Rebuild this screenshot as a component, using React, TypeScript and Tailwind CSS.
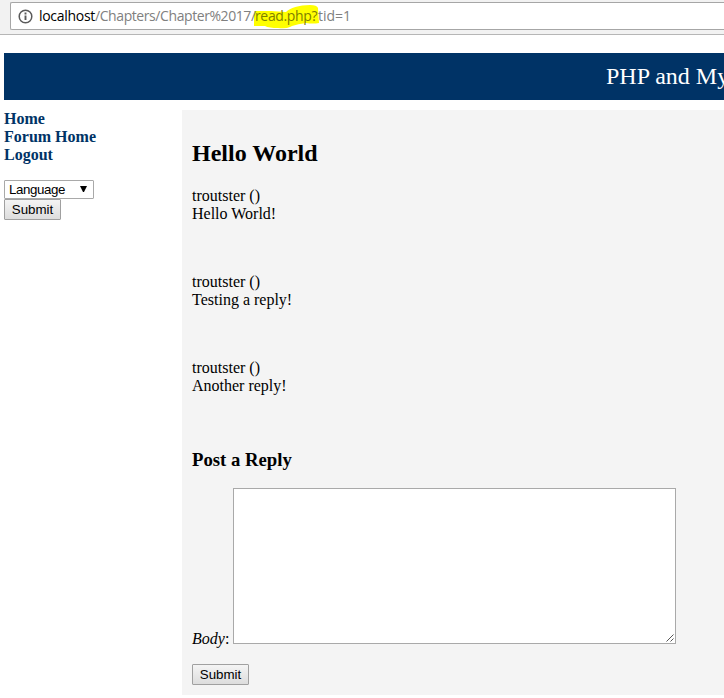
import React from "react";

const posts = ["Hello World!", "Testing a reply!", "Another reply!"];
const links = ["Home", "Forum Home", "Logout"];

function SubmitButton() {
  return (
    <button className="block h-[21px] w-[57px] rounded-[1px] border border-[#a0a0a0] bg-linear-to-b from-[#f4f4f4] to-[#dddddd] text-center font-['Liberation_Sans',Arial,sans-serif] text-[13.33px] leading-[18px] text-black">
      Submit
    </button>
  );
}

function AddressBar() {
  return (
    <div className="h-[35px] border-b border-[#b6b6b6] bg-[#f2f2f2] pt-[2px] pl-[10px]">
      <div className="relative flex h-[28px] items-center rounded-l-[2px] border border-r-0 border-[#a6a6a6] bg-white pl-[7px]">
        <svg className="absolute top-[2px] left-[241px]" width="70" height="25" viewBox="0 0 70 25">
          <path
            d="M2 6 L19 6 L34 7 C38 3 47 0 58 0 Q65 0 66 3 L67 18 Q61 19 54 18 Q46 19 40 21 L38 22 Q34 24 26 23 Q17 23 13 21 L2 21 Z"
            fill="#ffff00"
          />
        </svg>
        <svg className="shrink-0" width="15" height="15" viewBox="0 0 15 15" fill="none">
          <circle cx="7.5" cy="7.5" r="6.3" stroke="#5a5a5a" strokeWidth="1.5" />
          <path d="M7.5 6.5V11M7.5 3.6V5.4" stroke="#5a5a5a" strokeWidth="1.9" />
        </svg>
        <div className="relative ml-[6px] flex font-['Open_Sans',sans-serif] text-[14px] leading-[20px] whitespace-pre text-[#808080]">
          <span className="w-[56px] tracking-[-0.3px] text-black">localhost</span>
          <span className="w-[160px] tracking-[-0.42px]">/Chapters/Chapter%2017/</span>
          <span className="w-[63px] tracking-[-0.35px] text-[#808000]">read.php?</span>
          <span>tid=1</span>
        </div>
      </div>
    </div>
  );
}

export default function App() {
  return (
    <div className="h-[698px] w-[724px] overflow-hidden bg-white font-['Liberation_Serif','Times_New_Roman',serif] text-[16px] leading-[18px] text-black">
      <AddressBar />
      <header className="mt-[18px] ml-1 h-[47px] bg-[#003366] pl-[602px] text-[24px] leading-[46px] whitespace-nowrap text-white">
        PHP and My
      </header>
      <div className="mt-[10px] flex pl-1">
        <aside className="w-[178px]">
          <nav className="flex flex-col font-bold text-[#003366]">
            {links.map((link) => (
              <a key={link}>{link}</a>
            ))}
          </nav>
          <div className="mt-4 flex h-[19px] w-[90px] items-center justify-between rounded-[1px] border border-[#a9a9a9] bg-white pr-[6px] pl-1 font-['Liberation_Sans',Arial,sans-serif] text-[13.33px] leading-[17px]">
            <span className="tracking-[-0.4px]">Language</span>
            <svg className="mb-[2px]" width="7" height="6" viewBox="0 0 7 6">
              <path d="M0 0H7L4 6H3Z" fill="black" />
            </svg>
          </div>
          <SubmitButton />
        </aside>
        <main className="h-[585px] flex-1 bg-[#f4f4f4] pt-[30px] pl-[10px]">
          <h2 className="text-[24px] leading-[27px] font-bold">Hello World</h2>
          <div className="mt-5 flex flex-col gap-[50px]">
            {posts.map((post) => (
              <div key={post}>
                <p>troutster ()</p>
                <p>{post}</p>
              </div>
            ))}
          </div>
          <h3 className="mt-[54px] text-[18.72px] leading-[21px] font-bold">Post a Reply</h3>
          <div className="mt-[18px] flex h-[156px] items-end">
            <span className="-mb-1 w-[41px]">
              <em>Body</em>:
            </span>
            <div className="flex h-[156px] w-[443px] items-end justify-end border border-[#a9a9a9] bg-white p-px">
              <svg width="8" height="8" viewBox="0 0 8 8" stroke="#555555" strokeWidth="1">
                <path d="M0.5 7.5L7.5 0.5M4.5 7.5L7.5 4.5" />
              </svg>
            </div>
          </div>
          <div className="mt-5">
            <SubmitButton />
          </div>
        </main>
      </div>
    </div>
  );
}
